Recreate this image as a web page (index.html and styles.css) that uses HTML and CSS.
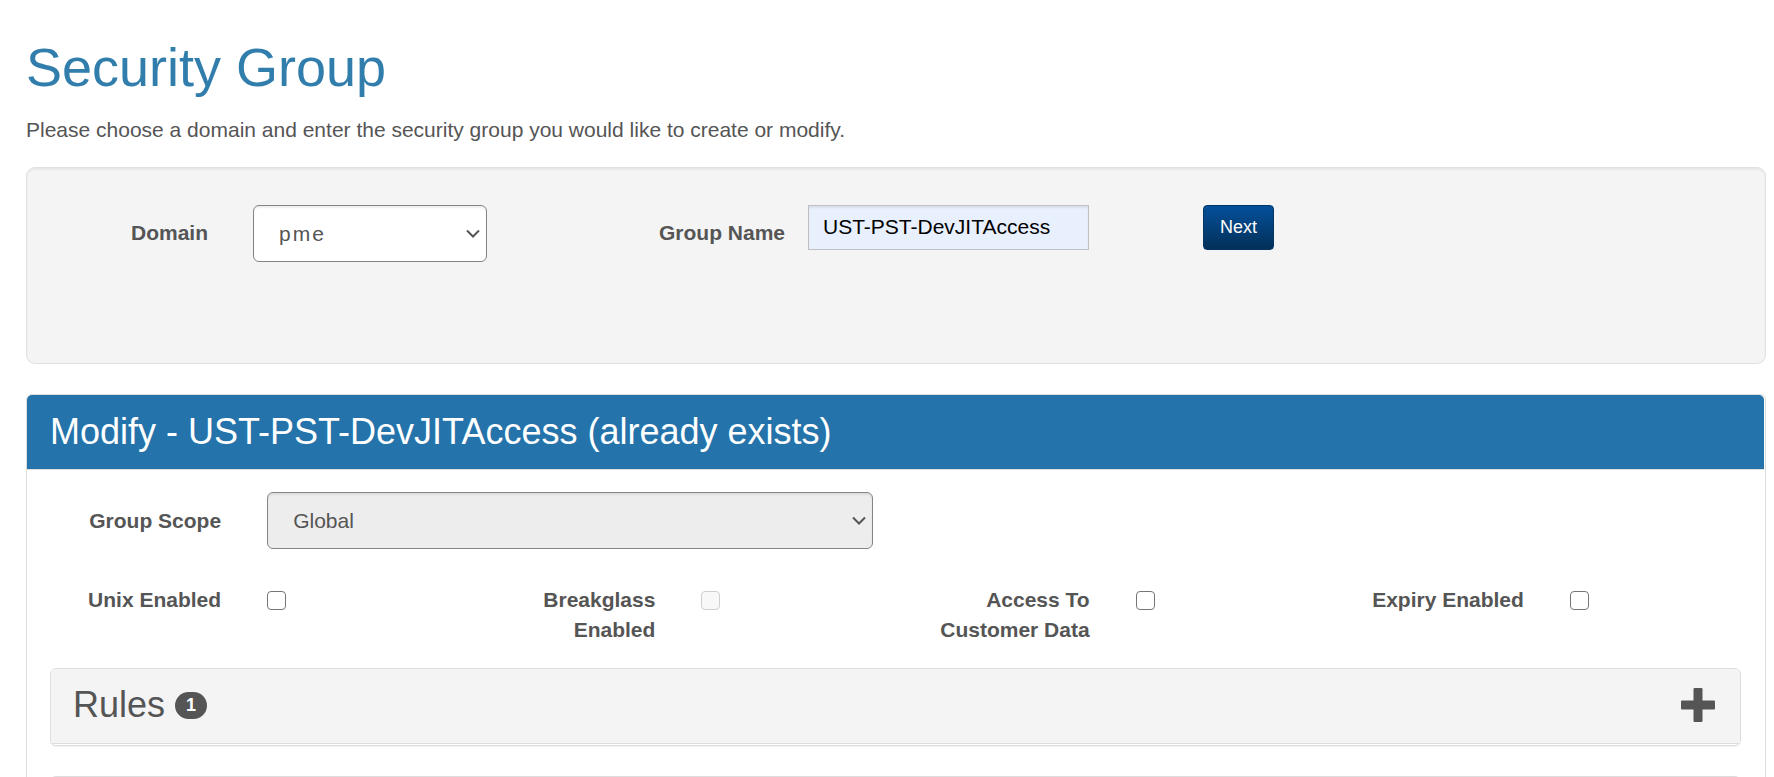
FILE: index.html
```html
<!DOCTYPE html>
<html lang="en">
<head>
<meta charset="utf-8">
<title>Security Group</title>
<link rel="stylesheet" href="styles.css">
</head>
<body>
<main class="page">
  <h1 class="page-title">Security Group</h1>
  <p class="intro">Please choose a domain and enter the security group you would like to create or modify.</p>

  <form class="well">
    <label class="field-label" for="domain">Domain</label>
    <div class="domain-cell select-wrap">
      <select class="select select-domain" id="domain"><option>pme</option></select>
      <svg class="chevron" viewBox="0 0 14 9" aria-hidden="true"><path d="M1 1.5 7 7.5 13 1.5"/></svg>
    </div>
    <label class="field-label" for="group-name">Group Name</label>
    <div class="name-cell">
      <input class="text-input" id="group-name" type="text" value="UST-PST-DevJITAccess">
    </div>
    <div class="next-cell">
      <button class="btn" type="button">Next</button>
    </div>
  </form>

  <section class="panel">
    <h2 class="panel-heading">Modify - UST-PST-DevJITAccess (already exists)</h2>
    <div class="panel-body">
      <div class="scope-row">
        <label class="row-label scope-label" for="scope">Group Scope</label>
        <div class="scope-cell select-wrap">
          <select class="select" id="scope" disabled><option>Global</option></select>
          <svg class="chevron" viewBox="0 0 14 9" aria-hidden="true"><path d="M1 1.5 7 7.5 13 1.5"/></svg>
        </div>
      </div>
      <div class="check-row">
        <label class="row-label" for="unix">Unix Enabled</label>
        <div class="check-cell"><input class="check" id="unix" type="checkbox"></div>
        <label class="row-label" for="breakglass">Breakglass Enabled</label>
        <div class="check-cell"><input class="check" id="breakglass" type="checkbox" disabled></div>
        <label class="row-label" for="customer">Access To Customer Data</label>
        <div class="check-cell"><input class="check" id="customer" type="checkbox"></div>
        <label class="row-label" for="expiry">Expiry Enabled</label>
        <div class="check-cell"><input class="check" id="expiry" type="checkbox"></div>
      </div>
      <section class="subpanel">
        <div class="subpanel-heading">
          <h3 class="subpanel-title">Rules <span class="badge">1</span></h3>
          <button class="expand" type="button" aria-label="Expand rules">
            <svg class="plus" viewBox="0 0 34 34" aria-hidden="true"><path d="M13.500 0h7q1 0 1 1v11.500H33q1 0 1 1v7q0 1-1 1H21.500V33q0 1-1 1h-7q-1 0-1-1V21.500H1q-1 0-1-1v-7q0-1 1-1h11.500V1q0-1 1-1z"/></svg>
          </button>
        </div>
      </section>
      <section class="subpanel">
        <div class="subpanel-heading"></div>
      </section>
    </div>
  </section>
</main>
</body>
</html>
```
FILE: styles.css
```css
* {
  box-sizing: border-box;
}

html {
  overflow: hidden;
}

body {
  margin: 0;
  background: #fff;
  color: #555;
  font-family: "Liberation Sans", Arial, sans-serif;
  font-size: 21px;
  line-height: 30px;
}

.page {
  padding: 37px 8px 0 26px;
}

.page-title {
  margin: 0 0 18px;
  color: #317eac;
  font-size: 54px;
  font-weight: 400;
  line-height: 60px;
}

.intro {
  margin: 0 0 22px;
}

.well {
  display: grid;
  grid-template-columns: 181fr 279fr 298fr 304fr 676fr;
  align-items: start;
  min-height: 197px;
  margin-bottom: 30px;
  padding: 37px 0;
  background: #f4f4f4;
  border: 1px solid #e1e1e1;
  border-radius: 9px;
  box-shadow: inset 0 2px 2px rgba(0, 0, 0, 0.05);
}

.field-label {
  padding-top: 13px;
  font-weight: 700;
  text-align: right;
}

.domain-cell {
  padding-left: 45px;
}

.name-cell {
  padding-left: 23px;
}

.next-cell {
  padding-left: 114px;
}

.select-wrap {
  position: relative;
}

.select {
  display: block;
  width: 100%;
  height: 57px;
  padding: 0 36px 0 25px;
  appearance: none;
  background: #fff;
  border: 1px solid #858585;
  border-radius: 6px;
  box-shadow: inset 0 2px 2px rgba(0, 0, 0, 0.07);
  color: #555;
  font: inherit;
}

.select-domain {
  letter-spacing: 2px;
}

.select:disabled {
  background: #ededed;
  opacity: 1;
}

.chevron {
  position: absolute;
  top: 24px;
  right: 7px;
  width: 14px;
  height: 9px;
  fill: none;
  stroke: #555;
  stroke-width: 2;
  pointer-events: none;
}

.text-input {
  display: block;
  width: 100%;
  height: 45px;
  padding: 0 14px 2px;
  background: #e8f0fe;
  border: 1px solid #c0c0c4;
  border-radius: 0;
  box-shadow: inset 0 2px 2px rgba(0, 0, 0, 0.07);
  color: #000;
  font: inherit;
}

.btn {
  display: block;
  height: 45px;
  padding: 0 16px 2px;
  background: linear-gradient(#04509b, #033058);
  border: 1px solid #033565;
  border-radius: 4px;
  color: #fff;
  font: inherit;
  font-size: 18px;
}

.panel {
  padding-right: 1px;
  border: 1px solid #ddd;
  border-radius: 6px;
}

.panel-heading {
  margin: 0;
  padding: 17px 23px;
  background: #2473ab;
  border-bottom: 1px solid #ddd;
  border-radius: 5px 5px 0 0;
  color: #fff;
  font-size: 36px;
  font-weight: 400;
  line-height: 40px;
}

.panel-body {
  padding: 22px 0;
}

.scope-row,
.check-row {
  display: grid;
  grid-template-columns: repeat(8, 1fr);
  align-items: start;
}

.scope-row {
  margin-bottom: 36px;
}

.check-row {
  margin-bottom: 23px;
}

.row-label {
  padding: 0 23px;
  font-weight: 700;
  text-align: right;
}

.scope-label {
  padding-top: 14px;
}

.scope-cell {
  grid-column: span 3;
  padding: 0 23px;
}

.scope-cell .chevron {
  right: 30px;
}

.check-cell {
  padding: 6px 23px 0;
}

.check {
  display: block;
  width: 19px;
  height: 19px;
  margin: 0;
  appearance: none;
  background: #fff;
  border: 1px solid #767676;
  border-radius: 4px;
}

.check:disabled {
  background: #f8f8f8;
  border-color: #cfcfcf;
}

.subpanel {
  margin: 0 23px 30px;
  padding-bottom: 1px;
  border: 1px solid #ddd;
  border-radius: 6px;
  box-shadow: 0 1px 1px rgba(0, 0, 0, 0.05);
}

.subpanel-heading {
  display: flex;
  align-items: center;
  justify-content: space-between;
  min-height: 75px;
  padding: 0 25px 2px 22px;
  background: #f4f4f4;
  border-bottom: 1px solid #ddd;
  border-radius: 5px 5px 0 0;
}

.subpanel-title {
  display: flex;
  align-items: center;
  gap: 10px;
  margin: 0;
  font-size: 36px;
  font-weight: 400;
  line-height: 42px;
}

.badge {
  padding: 0 11px;
  background: #555;
  border-radius: 14px;
  color: #fff;
  font-size: 18px;
  font-weight: 700;
  line-height: 27px;
}

.expand {
  display: block;
  padding: 0;
  background: none;
  border: 0;
}

.plus {
  display: block;
  width: 34px;
  height: 34px;
  fill: #555;
}
```
